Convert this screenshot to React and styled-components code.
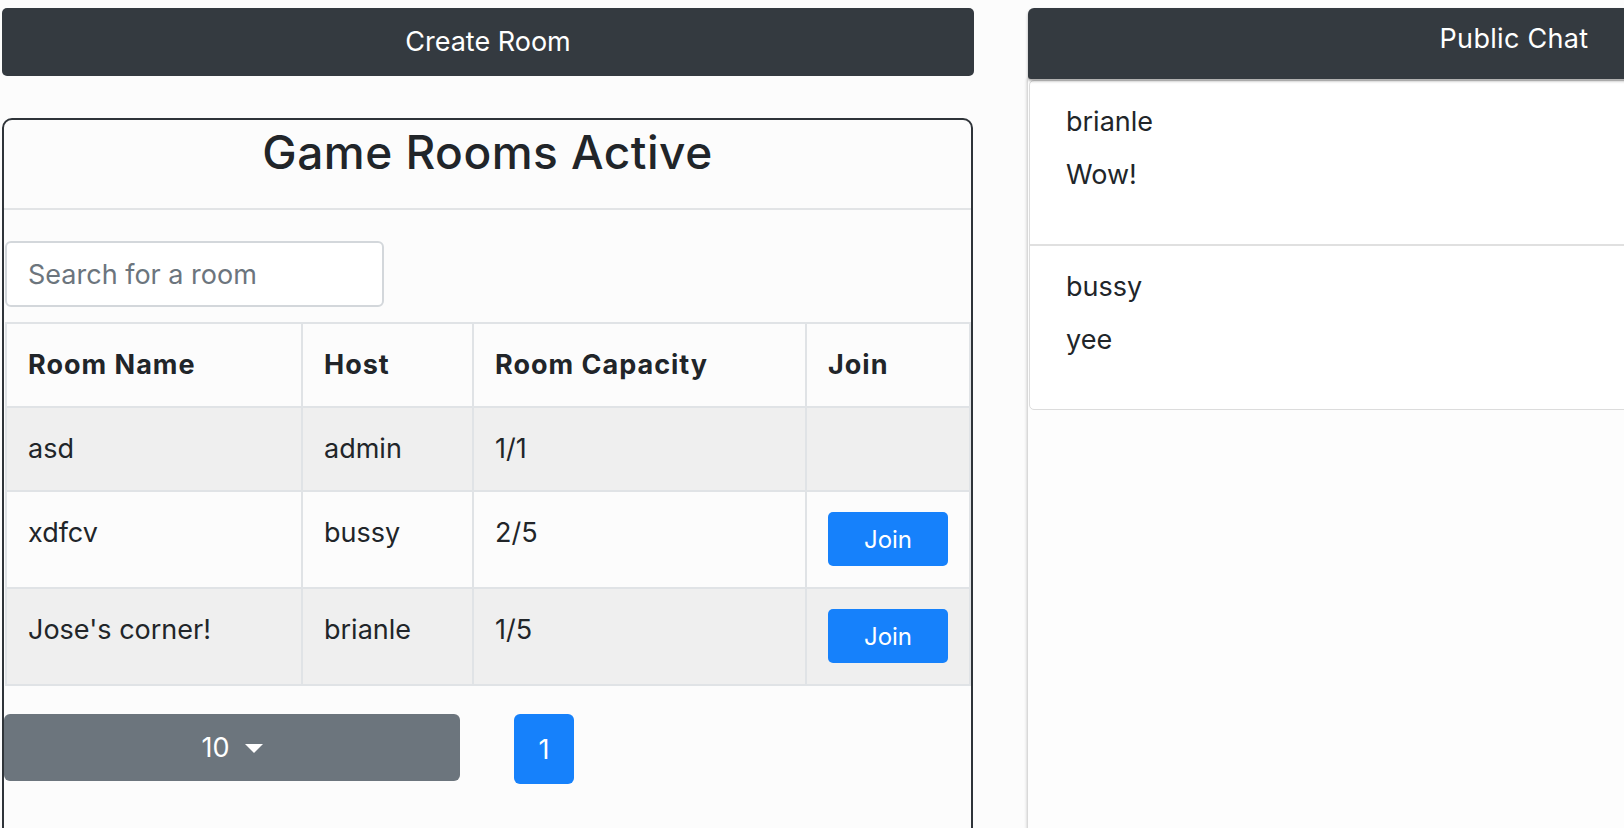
import React, { useState } from 'react';
import styled, { createGlobalStyle } from 'styled-components';

const GlobalStyle = createGlobalStyle`
  html, body {
    margin: 0;
    padding: 0;
    overflow: hidden;
    background: #fcfcfc;
  }
  body {
    font-family: Inter, "Liberation Sans", sans-serif;
    font-size: 27px;
    line-height: 41px;
    color: #212529;
  }
  * {
    box-sizing: border-box;
  }
`;

const Page = styled.div`
  display: flex;
  align-items: flex-start;
  gap: 54px;
  padding: 8px 0 0 2px;
  width: 2010px;
`;

const Column = styled.section`
  flex: 0 0 972px;
  display: flex;
  flex-direction: column;
`;

const DarkButton = styled.button`
  display: block;
  width: 100%;
  border: 0;
  border-radius: 5px;
  background: #343a40;
  color: #fff;
  font: inherit;
  padding: 13px 0 14px;
  text-align: center;
  cursor: pointer;
`;

const RoomsCard = styled.div`
  margin-top: 42px;
  width: 971px;
  min-height: 760px;
  border: 2px solid #2f3439;
  border-radius: 10px;
  background: #fcfcfc;
`;

const CardHeader = styled.header`
  padding: 4px 0 28px;
  border-bottom: 2px solid #e2e4e6;
  text-align: center;
`;

const Title = styled.h3`
  margin: 0;
  font-size: 46px;
  font-weight: 500;
  line-height: 56px;
  letter-spacing: 0.5px;
`;

const CardBody = styled.div`
  padding: 31px 0 0 1px;
`;

const SearchInput = styled.input`
  display: block;
  width: 379px;
  height: 66px;
  padding: 0 21px;
  border: 2px solid #d3d7db;
  border-radius: 6px;
  background: #fff;
  font: inherit;
  color: #495057;
  outline: none;

  &::placeholder {
    color: #6c757d;
  }
`;

const Table = styled.table`
  margin-top: 15px;
  width: 964px;
  border-collapse: collapse;
  table-layout: fixed;
`;

const Row = styled.tr`
  background: ${({ $striped }) => ($striped ? '#efefef' : '#fcfcfc')};
`;

const HeadCell = styled.th`
  padding: 20px 21px 21px;
  border: 2px solid #e0e3e6;
  text-align: left;
  font-weight: 700;
  letter-spacing: 1px;
  vertical-align: top;
`;

const Cell = styled.td`
  padding: 20px 21px 21px;
  border: 2px solid #e0e3e6;
  vertical-align: top;
`;

const JoinButton = styled.button`
  display: block;
  width: 100%;
  height: 54px;
  border: 0;
  border-radius: 5px;
  background: #1681fb;
  color: #fff;
  font-family: inherit;
  font-size: 24px;
  cursor: pointer;
`;

const Footer = styled.div`
  display: flex;
  align-items: flex-start;
  gap: 54px;
  margin-top: 28px;
  margin-left: -1px;
`;

const SizeButton = styled.button`
  display: flex;
  align-items: center;
  justify-content: center;
  width: 456px;
  height: 67px;
  border: 0;
  border-radius: 6px;
  background: #6c757d;
  color: #fff;
  font: inherit;
  cursor: pointer;
`;

const Caret = styled.span`
  display: inline-block;
  margin-left: 15px;
  margin-top: 2px;
  border-top: 9px solid #fff;
  border-left: 9px solid transparent;
  border-right: 9px solid transparent;
`;

const PageLink = styled.a`
  display: flex;
  align-items: center;
  justify-content: center;
  width: 60px;
  height: 70px;
  border-radius: 6px;
  background: ${({ $active }) => ($active ? '#1681fb' : '#fff')};
  color: ${({ $active }) => ($active ? '#fff' : '#1681fb')};
  text-decoration: none;
`;

const ChatHeader = styled.header`
  position: relative;
  z-index: 1;
  padding: 10px 0 20px;
  border-radius: 6px 6px 3px 3px;
  background: #343a40;
  color: #fff;
  text-align: center;
  letter-spacing: 0.3px;
  box-shadow: 0 2px 3px rgba(0, 0, 0, 0.35);
`;

const ChatBody = styled.div`
  min-height: 760px;
  padding: 1px 0 0 1px;
  background: #fdfdfd;
  box-shadow: -1px 0 3px rgba(0, 0, 0, 0.22);
`;

const MessageList = styled.ul`
  list-style: none;
  margin: 0;
  padding: 0;
  border: 1px solid #dcdcdc;
  border-radius: 5px;
  background: #fff;
`;

const Message = styled.li`
  padding: 20px 36px 21px;
  & + & {
    border-top: 2px solid #e0e0e0;
  }
`;

const Author = styled.div`
  margin-bottom: 12px;
`;

const Text = styled.p`
  margin: 0 0 28px;
`;

const rooms = [
  { name: 'asd', host: 'admin', capacity: '1/1', full: true },
  { name: 'xdfcv', host: 'bussy', capacity: '2/5', full: false },
  { name: "Jose's corner!", host: 'brianle', capacity: '1/5', full: false },
];

const messages = [
  { author: 'brianle', text: 'Wow!' },
  { author: 'bussy', text: 'yee' },
];

export default function App() {
  const [query, setQuery] = useState('');
  const visible = rooms.filter((r) => r.name.toLowerCase().includes(query.toLowerCase()));

  return (
    <>
      <GlobalStyle />
      <Page>
        <Column>
          <DarkButton>Create Room</DarkButton>
          <RoomsCard>
            <CardHeader>
              <Title>Game Rooms Active</Title>
            </CardHeader>
            <CardBody>
              <SearchInput
                placeholder="Search for a room"
                value={query}
                onChange={(e) => setQuery(e.target.value)}
              />
              <Table>
                <colgroup>
                  <col style={{ width: 296 }} />
                  <col style={{ width: 171 }} />
                  <col style={{ width: 333 }} />
                  <col style={{ width: 164 }} />
                </colgroup>
                <thead>
                  <Row>
                    <HeadCell>Room Name</HeadCell>
                    <HeadCell>Host</HeadCell>
                    <HeadCell>Room Capacity</HeadCell>
                    <HeadCell>Join</HeadCell>
                  </Row>
                </thead>
                <tbody>
                  {visible.map((room, i) => (
                    <Row key={room.name} $striped={i % 2 === 0}>
                      <Cell>{room.name}</Cell>
                      <Cell>{room.host}</Cell>
                      <Cell>{room.capacity}</Cell>
                      <Cell>{!room.full && <JoinButton>Join</JoinButton>}</Cell>
                    </Row>
                  ))}
                </tbody>
              </Table>
              <Footer>
                <SizeButton>
                  10<Caret />
                </SizeButton>
                <PageLink href="#" $active>
                  1
                </PageLink>
              </Footer>
            </CardBody>
          </RoomsCard>
        </Column>
        <Column>
          <ChatHeader>Public Chat</ChatHeader>
          <ChatBody>
            <MessageList>
              {messages.map((m) => (
                <Message key={m.author}>
                  <Author>{m.author}</Author>
                  <Text>{m.text}</Text>
                </Message>
              ))}
            </MessageList>
          </ChatBody>
        </Column>
      </Page>
    </>
  );
}
